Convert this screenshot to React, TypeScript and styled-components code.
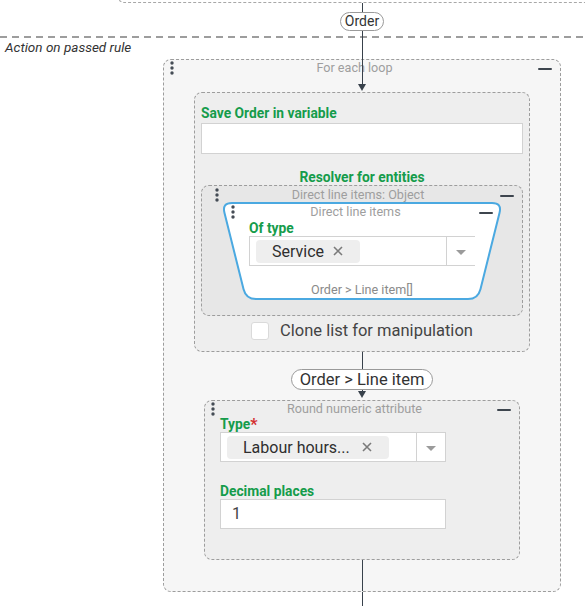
import React from 'react';
import styled, { createGlobalStyle } from 'styled-components';

const LINE = '#38414b';
const GREEN = '#159c4b';
const DASH = '#9d9d9d';
const MUTED = '#9e9e9e';

const GlobalStyle = createGlobalStyle`
  html, body {
    margin: 0;
    padding: 0;
    background: #ffffff;
  }
  body {
    font-family: Roboto, "Noto Sans", Arial, sans-serif;
    color: #333;
  }
  * {
    box-sizing: border-box;
  }
`;

type HeaderProps = {
  title: string;
  dotsInset: number;
  minusInset: number;
  padTop: number;
  lineHeight: number;
};

function DotsIcon() {
  return (
    <svg width="4" height="14" viewBox="0 0 4 14">
      <circle cx="2" cy="2" r="1.7" fill="#454c55" />
      <circle cx="2" cy="7" r="1.7" fill="#454c55" />
      <circle cx="2" cy="12" r="1.7" fill="#454c55" />
    </svg>
  );
}

function BoxHeader(props: HeaderProps) {
  let { title, dotsInset, minusInset, padTop, lineHeight } = props;
  return (
    <HeaderRow $left={dotsInset} $right={minusInset} $top={padTop}>
      <DotsCell>
        <DotsIcon />
      </DotsCell>
      <HeaderTitle $lh={lineHeight}>{title}</HeaderTitle>
      <MinusCell>
        <Minus />
      </MinusCell>
    </HeaderRow>
  );
}

function CloseIcon() {
  return (
    <svg width="10" height="10" viewBox="0 0 10 10">
      <path d="M1 1 L9 9 M9 1 L1 9" stroke="#7a7a7a" strokeWidth="1.6" />
    </svg>
  );
}

type SelectProps = {
  value: string;
  width: number;
  openRight?: boolean;
  textGap: number;
};

function TagSelect(props: SelectProps) {
  let { value, width, openRight = false, textGap } = props;
  return (
    <SelectBox $width={width} $openRight={openRight}>
      <ChipArea>
        <Chip>
          <span>{value}</span>
          <ChipClose $gap={textGap}>
            <CloseIcon />
          </ChipClose>
        </Chip>
      </ChipArea>
      <CaretCell>
        <Caret />
      </CaretCell>
    </SelectBox>
  );
}

function TrapezoidShape() {
  return (
    <ShapeSvg viewBox="0 0 282 97" preserveAspectRatio="none">
      <path
        d="M11 1 L271 1 Q281 1 278.55 10.7 L259.45 86.3 Q257 96 247 96 L35 96 Q25 96 22.55 86.3 L3.45 10.7 Q1 1 11 1 Z"
        fill="#ffffff"
        stroke="#4ba9e1"
        strokeWidth="2"
      />
    </ShapeSvg>
  );
}

export default function App() {
  return (
    <Page>
      <GlobalStyle />
      <TopBox />
      <FlowColumn>
        <VLine $h={9} />
        <Pill $size={14}>Order</Pill>
        <VLine $h={5} />
      </FlowColumn>
      <Separator />
      <SectionLabel>Action on passed rule</SectionLabel>
      <LoopBox>
        <TopArrow>
          <VLine $h={48} />
          <ArrowHead />
        </TopArrow>
        <BoxHeader
          title="For each loop"
          dotsInset={6}
          minusInset={8}
          padTop={0}
          lineHeight={16}
        />
        <VariablePanel>
          <FieldLabel>Save Order in variable</FieldLabel>
          <TextInput />
          <CenterLabel>Resolver for entities</CenterLabel>
          <ObjectPanel>
            <BoxHeader
              title="Direct line items: Object"
              dotsInset={13}
              minusInset={8}
              padTop={2}
              lineHeight={14}
            />
            <TrapezoidCard>
              <TrapezoidShape />
              <BoxHeader
                title="Direct line items"
                dotsInset={10}
                minusInset={10}
                padTop={2}
                lineHeight={16}
              />
              <TrapezoidBody>
                <FieldLabel>Of type</FieldLabel>
                <TagSelect value="Service" width={226} openRight textGap={9} />
              </TrapezoidBody>
              <Footnote>Order &gt; Line item[]</Footnote>
            </TrapezoidCard>
          </ObjectPanel>
          <CheckRow>
            <CheckBox />
            <CheckLabel>Clone list for manipulation</CheckLabel>
          </CheckRow>
        </VariablePanel>
        <VLine $h={17} />
        <Pill $size={16}>Order &gt; Line item</Pill>
        <VLine $h={1} />
        <ArrowHead />
        <RoundPanel>
          <BoxHeader
            title="Round numeric attribute"
            dotsInset={6}
            minusInset={8}
            padTop={1}
            lineHeight={14}
          />
          <RoundBody>
            <FieldLabel>
              Type<Required>*</Required>
            </FieldLabel>
            <TagSelect value="Labour hours..." width={226} textGap={12} />
            <FieldLabel $top={21}>Decimal places</FieldLabel>
            <NumberInput>1</NumberInput>
          </RoundBody>
        </RoundPanel>
        <VLine $h={31} />
      </LoopBox>
      <FlowColumn>
        <VLine $h={14} />
      </FlowColumn>
    </Page>
  );
}

const Page = styled.div`
  width: 585px;
  height: 606px;
  overflow: hidden;
  background: #ffffff;
`;

const TopBox = styled.div`
  margin-left: 118px;
  margin-top: -17px;
  width: 520px;
  height: 20px;
  border-left: 1px dashed #a8a8a8;
  border-bottom: 1px dashed #a8a8a8;
  border-bottom-left-radius: 6px;
`;

const FlowColumn = styled.div`
  margin-left: 163px;
  width: 398px;
  display: flex;
  flex-direction: column;
  align-items: center;
`;

const VLine = styled.div<{ $h: number }>`
  width: 1px;
  height: ${(p) => p.$h}px;
  background: ${LINE};
  flex-shrink: 0;
`;

const ArrowHead = styled.div`
  width: 0;
  height: 0;
  border-left: 4.5px solid transparent;
  border-right: 4.5px solid transparent;
  border-top: 7px solid ${LINE};
  margin-bottom: 2px;
  flex-shrink: 0;
`;

const Pill = styled.div<{ $size: number }>`
  border: 1px solid #9a9a9a;
  border-radius: 12px;
  background: #ffffff;
  font-size: ${(p) => (p.$size > 14 ? 16.5 : p.$size)}px;
  line-height: ${(p) => p.$size + 3}px;
  padding: 0 ${(p) => (p.$size > 14 ? 8 : 4)}px;
  color: #333;
  white-space: nowrap;
`;

const Separator = styled.div`
  height: 2px;
  width: 100%;
  background: repeating-linear-gradient(
    to right,
    ${DASH} 0 7px,
    transparent 7px 12px
  );
`;

const SectionLabel = styled.div`
  margin: 1px 0 0 5px;
  font-size: 13.5px;
  line-height: 16px;
  font-style: italic;
  color: #333;
`;

const LoopBox = styled.div`
  position: relative;
  margin: 4px 0 0 163px;
  width: 398px;
  background: #f6f6f6;
  border: 1px dashed ${DASH};
  border-radius: 8px;
  display: flex;
  flex-direction: column;
  align-items: center;
`;

const TopArrow = styled.div`
  position: absolute;
  top: -24px;
  left: 50%;
  transform: translateX(-50%);
  display: flex;
  flex-direction: column;
  align-items: center;
  z-index: 2;
`;

const HeaderRow = styled.div<{ $left: number; $right: number; $top: number }>`
  width: 100%;
  display: grid;
  grid-template-columns: 1fr auto 1fr;
  align-items: center;
  padding: ${(p) => p.$top}px ${(p) => p.$right}px 0 ${(p) => p.$left}px;
  position: relative;
`;

const DotsCell = styled.div`
  justify-self: start;
  display: flex;
`;

const MinusCell = styled.div`
  justify-self: end;
  display: flex;
  padding-top: 2px;
`;

const Minus = styled.div`
  width: 14px;
  height: 2.5px;
  border-radius: 1px;
  background: #3d454e;
`;

const HeaderTitle = styled.div<{ $lh: number }>`
  margin-right: 13px;
  font-size: 12.6px;
  line-height: ${(p) => p.$lh}px;
  color: ${MUTED};
  white-space: nowrap;
`;

const VariablePanel = styled.div`
  margin-top: 16px;
  width: 336px;
  background: #eeeeee;
  border: 1px dashed ${DASH};
  border-radius: 8px;
  padding: 12px 6px 11px;
  display: flex;
  flex-direction: column;
`;

const FieldLabel = styled.div<{ $top?: number }>`
  margin-top: ${(p) => p.$top ?? 0}px;
  font-size: 13.8px;
  line-height: 16px;
  font-weight: 700;
  color: ${GREEN};
  align-self: flex-start;
  white-space: nowrap;
`;

const Required = styled.span`
  color: #d32f2f;
  font-size: 16px;
  line-height: 10px;
  vertical-align: -1px;
`;

const TextInput = styled.div`
  margin-top: 2px;
  height: 31px;
  background: #ffffff;
  border: 1px solid #d2d2d2;
`;

const CenterLabel = styled.div`
  margin-top: 15px;
  font-size: 13.8px;
  line-height: 16px;
  font-weight: 700;
  color: ${GREEN};
  text-align: center;
`;

const ObjectPanel = styled.div`
  width: 100%;
  background: #e7e7e7;
  border: 1px dashed ${DASH};
  border-radius: 8px;
  padding: 0 0 15px;
  display: flex;
  flex-direction: column;
  align-items: center;
`;

const TrapezoidCard = styled.div`
  position: relative;
  width: 282px;
  display: flex;
  flex-direction: column;
  padding-bottom: 2px;
`;

const ShapeSvg = styled.svg`
  position: absolute;
  inset: 0;
  width: 100%;
  height: 100%;
`;

const TrapezoidBody = styled.div`
  position: relative;
  padding: 0 28px;
  display: flex;
  flex-direction: column;
`;

const Footnote = styled.div`
  position: relative;
  margin-top: 16px;
  font-size: 12.6px;
  line-height: 16px;
  color: #8a8a8a;
  text-align: center;
`;

const SelectBox = styled.div<{ $width: number; $openRight: boolean }>`
  width: ${(p) => p.$width}px;
  height: 30px;
  background: #ffffff;
  border: 1px solid #d2d2d2;
  border-right: ${(p) => (p.$openRight ? 'none' : '1px solid #d2d2d2')};
  display: flex;
  align-items: stretch;
`;

const ChipArea = styled.div`
  flex: 1;
  display: flex;
  align-items: center;
  padding-left: 6px;
`;

const Chip = styled.div`
  height: 23px;
  display: flex;
  align-items: center;
  padding: 0 17px 0 16px;
  background: #eeeeee;
  border-radius: 4px;
  font-size: 16px;
  color: #2f2f2f;
  white-space: nowrap;
`;

const ChipClose = styled.span<{ $gap: number }>`
  display: flex;
  margin-left: ${(p) => p.$gap}px;
`;

const CaretCell = styled.div`
  width: 29px;
  border-left: 1px solid #d2d2d2;
  display: flex;
  align-items: center;
  justify-content: center;
`;

const Caret = styled.div`
  width: 0;
  height: 0;
  border-left: 5px solid transparent;
  border-right: 5px solid transparent;
  border-top: 5px solid #9b9b9b;
  margin-top: 2px;
`;

const CheckRow = styled.div`
  margin-top: 6px;
  display: flex;
  align-items: center;
  justify-content: center;
  gap: 11px;
`;

const CheckBox = styled.div`
  width: 18px;
  height: 18px;
  background: #ffffff;
  border: 1px solid #dadada;
  border-radius: 3px;
`;

const CheckLabel = styled.div`
  font-size: 16.5px;
  line-height: 18px;
  color: #444;
`;

const RoundPanel = styled.div`
  width: 316px;
  background: #eeeeee;
  border: 1px dashed ${DASH};
  border-radius: 8px;
  display: flex;
  flex-direction: column;
`;

const RoundBody = styled.div`
  padding: 0 15px 30px;
  display: flex;
  flex-direction: column;
`;

const NumberInput = styled.div`
  width: 226px;
  height: 30px;
  background: #ffffff;
  border: 1px solid #d2d2d2;
  padding-left: 11px;
  font-size: 16px;
  line-height: 28px;
  color: #444;
`;
